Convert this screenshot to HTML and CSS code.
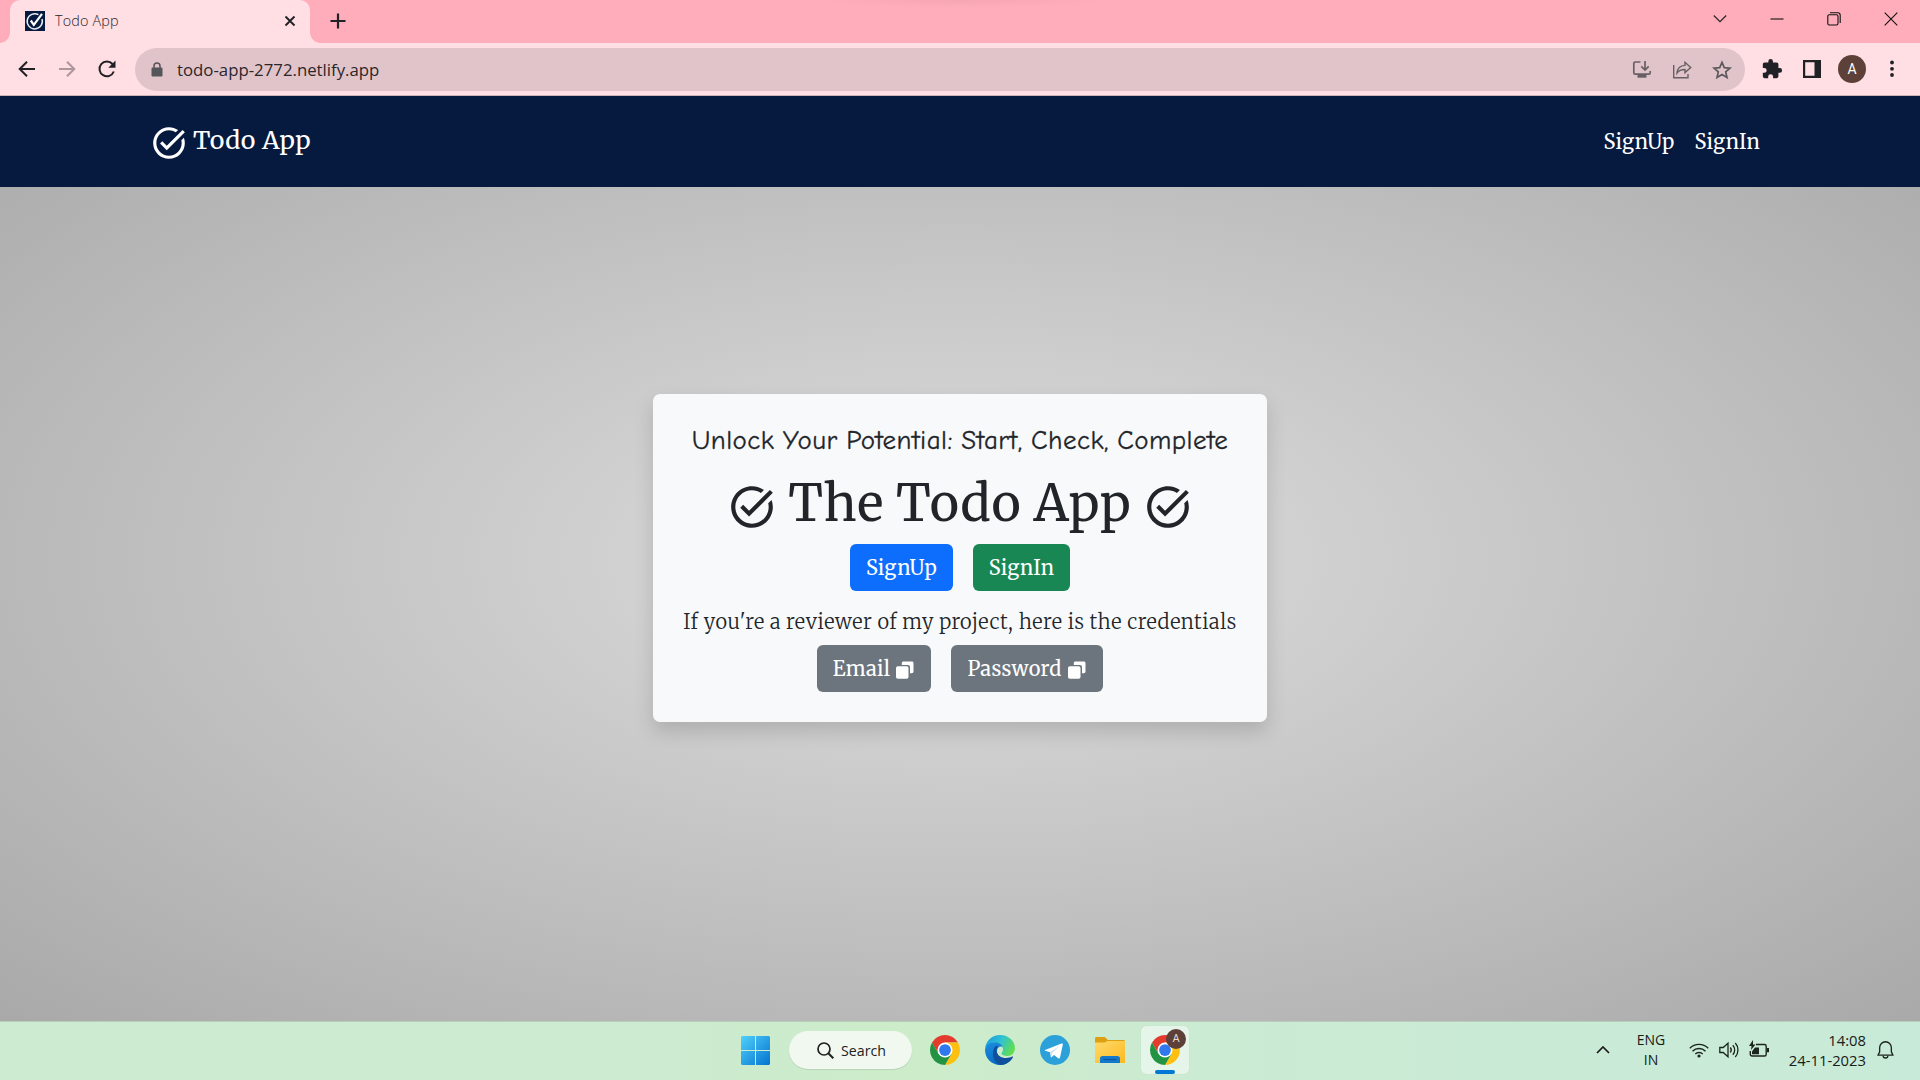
FILE: index.html
```html
<!DOCTYPE html>
<html lang="en">
<head>
<meta charset="utf-8">
<title>Todo App</title>
<link rel="stylesheet" href="styles.css">
</head>
<body>
<svg class="defs" width="0" height="0">
  <defs>
    <symbol id="task" viewBox="0 0 24 24">
      <path fill="currentColor" d="M22 5.18 10.59 16.6l-4.24-4.24 1.41-1.41 2.83 2.83 10-10L22 5.18zM19.79 10.22c.13.57.21 1.17.21 1.78 0 4.42-3.58 8-8 8s-8-3.58-8-8 3.58-8 8-8c1.58 0 3.04.46 4.28 1.25l1.44-1.44C16.1 2.67 14.13 2 12 2 6.48 2 2 6.48 2 12s4.48 10 10 10 10-4.48 10-10c0-1.19-.22-2.33-.6-3.39l-1.61 1.61z"/>
    </symbol>
    <symbol id="copy" viewBox="0 0 18 18">
      <path fill="#fff" d="M7.5.5h8.3c1 0 1.7.7 1.7 1.700v8.300c0 1-.7 1.700-1.700 1.700H14V6.200C14 4.900 13.100 4 11.800 4H5.800V2.200C5.800 1.200 6.500.5 7.500.5z"/>
      <rect fill="#fff" x="0" y="5.200" width="12.500" height="12.500" rx="1.800"/>
    </symbol>
    <symbol id="chrome" viewBox="0 0 48 48">
      <path fill="#e33b2e" d="M3.220 12A24 24 0 0 1 44.780 12L24 12L13.610 30z"/>
      <path fill="#fdc010" d="M44.780 12A24 24 0 0 1 24 48L34.390 30L24 12z"/>
      <path fill="#229342" d="M3.220 12A24 24 0 0 0 24 48L34.390 30L13.610 30z"/>
      <circle cx="24" cy="24" r="12" fill="#fff"/>
      <circle cx="24" cy="24" r="9.400" fill="#2f78ee"/>
    </symbol>
  </defs>
</svg>

<header class="tabstrip">
  <div class="tab">
    <svg class="favicon" viewBox="0 0 20 20"><rect width="20" height="20" fill="#061a40"/><path d="M13.500 3.700A7.600 7.600 0 1 0 17 8" fill="none" stroke="#e8ebf1" stroke-width="1.500"/><path d="M5.800 9.500l3 4.300L17 2.800" fill="none" stroke="#fff" stroke-width="2.200"/></svg>
    <span class="tab-title">Todo App</span>
    <svg class="tab-close" viewBox="0 0 12 12"><path d="M1.500 1.500l9 9M10.500 1.500l-9 9" stroke="#202124" stroke-width="1.900"/></svg>
  </div>
  <svg class="new-tab" viewBox="0 0 16 16"><path d="M8 .5v15M.5 8h15" stroke="#202124" stroke-width="2.200"/></svg>
  <div class="window-shade"></div>
  <div class="window-controls">
    <svg viewBox="0 0 14 14"><path d="M.8 3.500L7 9.700l6.200-6.200" fill="none" stroke="#222" stroke-width="1.100"/></svg>
    <svg viewBox="0 0 14 14"><path d="M.5 7h13" stroke="#111" stroke-width="1.100"/></svg>
    <svg viewBox="0 0 14 14"><g fill="none" stroke="#111" stroke-width="1.100"><rect x=".8" y="2.800" width="10.200" height="10.200" rx="1.500"/><path d="M3 .8h7.800c1.500 0 2.400 1 2.400 2.400V11"/></g></svg>
    <svg viewBox="0 0 14 14"><path d="M.7.7l12.600 12.600M13.300.7L.7 13.300" stroke="#111" stroke-width="1.100"/></svg>
  </div>
</header>

<div class="toolbar">
  <span class="cell"><svg width="20" height="20" viewBox="0 0 20 20"><path d="M18 10H3M10 2.700L2.700 10l7.300 7.300" fill="none" stroke="#202124" stroke-width="2"/></svg></span>
  <span class="cell"><svg width="20" height="20" viewBox="0 0 20 20"><path d="M2 10h15M10 2.700l7.300 7.300-7.300 7.300" fill="none" stroke="#ab979c" stroke-width="2"/></svg></span>
  <span class="cell"><svg width="20" height="20" viewBox="0 0 20 20"><path d="M16.800 12.500A7.400 7.400 0 1 1 15.500 5" fill="none" stroke="#202124" stroke-width="2"/><path d="M18.500 1.500v7.200h-7.200z" fill="#202124"/></svg></span>
  <div class="omnibox">
    <svg class="lock" viewBox="0 0 12 15"><path d="M3 6V4a3 3 0 0 1 6 0v2" fill="none" stroke="#5a5358" stroke-width="1.500"/><rect x=".5" y="5.500" width="11" height="9" rx="1.200" fill="#55565a"/></svg>
    <span class="url">todo-app-2772.netlify.app</span>
    <span class="cell"><svg width="20" height="20" viewBox="0 0 20 20"><g fill="none" stroke="#666064" stroke-width="1.700"><path d="M8.500 2H3.200C2.200 2 1.800 2.500 1.800 3.300v9.500c0 .9.500 1.400 1.400 1.400h13.600c.9 0 1.400-.5 1.400-1.400V11"/><path d="M13 1v8.500M9.300 6.300L13 10l3.700-3.700"/></g><path d="M5.500 15h9v2.700h-9z" fill="#666064"/></svg></span>
    <span class="cell"><svg width="20" height="20" viewBox="0 0 20 20"><g fill="none" stroke="#666064" stroke-width="1.400"><path d="M1.700 5v12.700H16V14"/><path d="M5 13c.5-5 3.500-7.300 8-7.600V2.300L18.700 7.500 13 12.600V9.500c-3.500 0-6 .8-8 3.500z"/></g></svg></span>
    <span class="cell"><svg width="20" height="20" viewBox="0 0 20 20"><path d="M10 2.300l2.300 5.300 5.700.5-4.300 3.800 1.300 5.600-5-3-5 3 1.300-5.600L2 8.100l5.700-.5z" fill="none" stroke="#5d595c" stroke-width="1.700"/></svg></span>
  </div>
  <span class="cell"><svg width="22" height="22" viewBox="0 0 24 24"><path fill="#202124" d="M20.500 11H19V7c0-1.100-.9-2-2-2h-4V3.500a2.500 2.500 0 0 0-5 0V5H4c-1.100 0-2 .9-2 2v3.800h1.500a2.700 2.700 0 0 1 0 5.400H2V20c0 1.100.9 2 2 2h3.800v-1.500a2.700 2.700 0 0 1 5.400 0V22H17c1.100 0 2-.9 2-2v-4h1.500a2.500 2.500 0 0 0 0-5z"/></svg></span>
  <span class="cell"><svg width="18" height="18" viewBox="0 0 18 18"><path fill="#202124" fill-rule="evenodd" d="M0 0h18v18H0zM2.200 2.200v13.600h9.300V2.200z"/></svg></span>
  <span class="cell"><span class="avatar">A</span></span>
  <span class="cell"><svg width="6" height="18" viewBox="0 0 6 18"><g fill="#202124"><circle cx="3" cy="2.500" r="1.900"/><circle cx="3" cy="8.800" r="1.900"/><circle cx="3" cy="15" r="1.900"/></g></svg></span>
</div>

<div class="page">
  <nav class="navbar">
    <div class="brand"><svg><use href="#task"/></svg><span>Todo App</span></div>
    <div class="nav-links"><span>SignUp</span><span>SignIn</span></div>
  </nav>
  <main class="stage">
    <section class="card">
      <p class="tagline">Unlock Your Potential: Start, Check, Complete</p>
      <h1 class="title"><svg><use href="#task"/></svg><span>The Todo App</span><svg><use href="#task"/></svg></h1>
      <div class="actions"><span class="btn primary">SignUp</span><span class="btn success">SignIn</span></div>
      <p class="note">If you're a reviewer of my project, here is the credentials</p>
      <div class="actions"><span class="btn secondary email">Email<svg><use href="#copy"/></svg></span><span class="btn secondary password">Password<svg><use href="#copy"/></svg></span></div>
    </section>
  </main>
</div>

<footer class="taskbar">
  <div class="apps">
    <svg class="start" viewBox="0 0 29 29"><defs><linearGradient id="win" gradientUnits="userSpaceOnUse" x1="0" y1="0" x2="29" y2="29"><stop offset="0" stop-color="#50d0fa"/><stop offset="1" stop-color="#0573d0"/></linearGradient></defs><path fill="url(#win)" d="M1 0h13v14H0V1zM15 0h13l1 1v13H15zM0 15h14v14H1l-1-1zM15 15h14v13l-1 1H15z"/></svg>
    <div class="search"><svg width="17" height="17" viewBox="0 0 17 17"><circle cx="7" cy="7" r="6" fill="none" stroke="#202020" stroke-width="1.700"/><path d="M11.300 11.300l5 5" stroke="#202020" stroke-width="2"/></svg><span>Search</span></div>
    <span class="app"><svg><use href="#chrome"/></svg></span>
    <span class="app"><svg viewBox="0 0 30 30"><defs><linearGradient id="eg" x1="0" y1=".2" x2="1" y2=".6"><stop offset="0" stop-color="#189be0"/><stop offset=".5" stop-color="#31c4cf"/><stop offset="1" stop-color="#62df48"/></linearGradient><linearGradient id="eb" x1="0" y1="0" x2=".5" y2="1"><stop offset="0" stop-color="#1b8fe0"/><stop offset="1" stop-color="#0668c0"/></linearGradient></defs>
      <path fill="url(#eg)" d="M0 14C.6 6 7 0 15 0c9 0 15 6.500 15 13 0 5-3.500 8-7.500 8-3.500 0-6-1.300-6-2.500 0-.8 1.500-1.600 1.500-4C18 10 14 7.500 10 7.500 4.500 7.500 1 11 0 14z"/>
      <path fill="url(#eb)" d="M0 15C.5 10 5 7.300 9.800 7.300c3.800 0 7 1.700 7.800 4.700-1.500-1.300-5.600-.5-5.600 4.500 0 6 6 9.500 15 6.500C24.500 27.500 20 30 15 30 7 30 0 23.500 0 15z"/>
      <path fill="#104f9b" d="M11 10.800c-5 4.700-4 15.700 4 19.100 5.500.2 10.200-2.900 13-7.700.2-.6-.3-.9-.8-.6-7.200 3.700-16-.1-15.600-6.600.1-1.500.7-2.800 1.500-3.600z"/></svg></span>
    <span class="app"><svg viewBox="0 0 30 30"><circle cx="15" cy="15" r="15" fill="#2ca0d9"/><path fill="#fff" d="M5 15L21.500 8.500c.8-.3 1.500.2 1.300 1.200L20 22.500c-.2 1-.9 1.200-1.700.7l-4.300-3.200-2.200 2.100c-.5.4-.9.300-1-.3l-.8-4.600-4.800-1.500c-.7-.3-.7-.5-.2-.7z"/><path fill="#c5deed" d="M10.300 17l8.900-5.800L12 18.100l-.6 3.700z"/></svg></span>
    <span class="app"><svg viewBox="0 0 30 30"><defs><linearGradient id="fold" x1="0" y1="0" x2="1" y2="1"><stop offset="0" stop-color="#ffda6b"/><stop offset="1" stop-color="#fcb91f"/></linearGradient></defs><path fill="#dda011" d="M0 3.500C0 2.600.6 2 1.500 2h8.300L13 5h15.500c.9 0 1.500.6 1.500 1.500V12H0z"/><path fill="url(#fold)" d="M0 7.500h9.500L12.500 6H30v22H0z"/><path fill="#1478cb" d="M5 28v-4.500C5 22 6 21 7.500 21h15c1.500 0 2.500 1 2.500 2.500V28z"/><path d="M8.500 24.500h13" stroke="#0b569c" stroke-width="1.200"/></svg></span>
    <span class="app active"><svg><use href="#chrome"/></svg><span class="badge">A</span></span>
  </div>
  <div class="tray">
    <svg class="chevron" viewBox="0 0 14 8"><path d="M1 7l6-6 6 6" fill="none" stroke="#1a1a1a" stroke-width="1.700"/></svg>
    <div class="lang"><span>ENG</span><span>IN</span></div>
    <svg class="status" viewBox="0 0 20 20"><g fill="none" stroke="#1c241e" stroke-width="1.400"><path d="M.8 8.200a13 13 0 0 1 18.400 0M3.500 11.200a9.200 9.200 0 0 1 13 0M6.300 14a5.300 5.300 0 0 1 7.400 0"/></g><circle cx="10" cy="16" r="1.600" fill="#1c241e"/></svg>
    <svg class="status" viewBox="0 0 20 20"><g fill="none" stroke="#1c241e" stroke-width="1.300"><path d="M.8 7.500h3.400L9 3.200v13.600l-4.800-4.300H.8z"/><path d="M11.300 7.500a4 4 0 0 1 0 5M13.800 5.200a7 7 0 0 1 0 9.600M16.300 3a10.500 10.500 0 0 1 0 14"/></g></svg>
    <svg class="status" viewBox="0 0 20 20"><path d="M7 4.500h8.500c1 0 1.700.7 1.700 1.700v8c0 1-.7 1.800-1.700 1.800H3c-1 0-1.700-.8-1.700-1.800V11" fill="none" stroke="#1c241e" stroke-width="1.400"/><path d="M18 8h2v4.300h-2zM3 14.300V11.500l3-4h4v6.800zM4 0L0 6h2.500L2 10l4.500-5.500H4z" fill="#1c241e"/></svg>
    <div class="clock"><span>14:08</span><span>24-11-2023</span></div>
    <svg class="bell" viewBox="0 0 18 20"><path d="M1 15.500L2.800 12V7.500a6.200 6.200 0 0 1 12.400 0V12L17 15.500z" fill="none" stroke="#1c241e" stroke-width="1.400" stroke-linejoin="round"/><path d="M6.500 16a2.500 2.500 0 0 0 5 0" fill="none" stroke="#1c241e" stroke-width="1.400"/></svg>
  </div>
</footer>
</body>
</html>
```
FILE: styles.css
```css
* { box-sizing: border-box; }
html, body { margin: 0; height: 1080px; overflow: hidden; }
body {
  display: flex;
  flex-direction: column;
  width: 1920px;
  font-family: "Open Sans", "Noto Sans", sans-serif;
  color: #202124;
}
p, h1 { margin: 0; font-weight: 400; }
svg { display: block; flex: none; }
.defs { position: absolute; }

/* Browser tab strip */
.tabstrip {
  display: flex;
  height: 43px;
  padding-left: 10px;
  background: #ffadbb;
}
.tab {
  position: relative;
  display: flex;
  align-items: center;
  width: 300px;
  height: 43px;
  padding: 0 14px 1px 15px;
  border-radius: 10px 10px 0 0;
  background: #ffdee4;
}
.tab::before, .tab::after {
  content: "";
  position: absolute;
  bottom: 0;
  width: 10px;
  height: 10px;
}
.tab::before { left: -10px; background: radial-gradient(circle at 0 0, #ffadbb 9.5px, #ffdee4 10px); }
.tab::after { right: -10px; background: radial-gradient(circle at 100% 0, #ffadbb 9.5px, #ffdee4 10px); }
.favicon { width: 20px; height: 20px; }
.tab-title { flex: 1; margin: -1px 0 0 10px; font-size: 14.4px; font-weight: 300; color: #2b2629; letter-spacing: .15px; }
.tab-close { width: 12px; height: 12px; }
.new-tab { width: 16px; height: 16px; margin: 13px 0 0 19.5px; }
.window-shade {
  width: 290px;
  height: 8px;
  margin-left: 470px;
  background: radial-gradient(ellipse 50% 100% at 50% 0, rgba(120, 60, 80, .07), transparent);
}
.window-controls { display: flex; margin-left: auto; padding-right: 1px; }
.window-controls svg { width: 14px; height: 14px; margin: 12px 21.5px 0; }

/* Address bar row */
.toolbar {
  display: flex;
  height: 53px;
  padding: 5px 8px 4px 7px;
  background: #ffdee4;
  border-bottom: 1px solid #cbb3ba;
}
.cell {
  display: flex;
  flex: none;
  align-items: center;
  justify-content: center;
  width: 40px;
  height: 42px;
}
.omnibox {
  display: flex;
  flex: 1;
  align-items: center;
  height: 43px;
  margin: 0 7px 0 8px;
  padding: 0 3px 0 16px;
  border-radius: 22px;
  background: #e1c4ca;
}
.lock { width: 12px; height: 15px; }
.url { flex: 1; margin-left: 14px; font-size: 16.8px; color: #2b2629; }
.avatar {
  width: 28px;
  height: 28px;
  border-radius: 50%;
  background: #5d4037;
  color: #fff;
  font: 14px/28px Roboto, sans-serif;
  text-align: center;
}

/* Web page */
.page {
  display: flex;
  flex-direction: column;
  height: 925px;
  background: radial-gradient(#dedede, darkgray);
  font-family: Merriweather, "DejaVu Serif Condensed", serif;
}
.navbar {
  display: flex;
  align-items: center;
  justify-content: space-between;
  height: 91px;
  padding: 0 160px 0 150px;
  background: #061a40;
  color: #fff;
}
.brand { display: flex; align-items: center; font-size: 25px; letter-spacing: .3px; }
.brand svg { width: 38px; height: 38px; margin-top: 3px; }
.brand span { margin: -4px 0 0 5px; line-height: 36px; }
.nav-links { display: flex; gap: 20px; font-size: 20px; letter-spacing: .3px; }
.stage {
  display: flex;
  justify-content: center;
  padding-top: 207px;
}
.card {
  display: flex;
  flex-direction: column;
  align-items: center;
  width: 614px;
  height: 328px;
  padding-top: 30px;
  border-radius: 7px;
  background: #f8f9fa;
  box-shadow: 0 10px 20px rgba(0, 0, 0, .15);
  color: #212529;
}
.tagline {
  height: 30px;
  font: 27px/34px "Comic Neue", "Open Sans", cursive;
  letter-spacing: .45px;
  word-spacing: -1px;
  white-space: nowrap;
  -webkit-text-stroke: .3px #212529;
}
.title {
  display: flex;
  align-items: center;
  height: 60px;
  margin: 20px 0 10px;
  font-size: 50px;
  letter-spacing: .5px;
  line-height: 60px;
  white-space: nowrap;
}
.title svg { width: 50px; height: 50px; margin-top: 6px; }
.title span { margin: 0 12px 0 11.5px; }
.actions { display: flex; gap: 20px; }
.btn {
  display: flex;
  align-items: center;
  justify-content: center;
  width: 103px;
  height: 47px;
  border-radius: 6px;
  color: #fff;
  font-size: 20px;
  letter-spacing: .3px;
}
.primary { background: #0d6efd; }
.success { width: 97px; background: #198754; }
.secondary { background: #6c757d; }
.email { width: 114px; }
.password { width: 152px; }
.btn svg { width: 18px; height: 18px; margin: 3px 1px 0 6px; }
.note { margin: 16px 0 8px; font-size: 20px; line-height: 30px; letter-spacing: .5px; white-space: nowrap; font-weight: 300; }

/* Desktop taskbar */
.taskbar {
  display: flex;
  justify-content: space-between;
  height: 59px;
  padding: 0 26px 2px 741px;
  border-top: 1px solid #b9cdbb;
  background: linear-gradient(90deg, #cdebd1, #ccebd0 35%, #cdecc9 47%, #cbebd3 62%, #c8ead8);
}
.apps { display: flex; align-items: center; }
.start { width: 29px; height: 29px; }
.search {
  display: flex;
  align-items: center;
  width: 123px;
  height: 38px;
  margin: 0 9px 0 19px;
  padding-left: 28px;
  border-radius: 19px;
  background: #f0f8f0;
  box-shadow: 0 1px 1px rgba(0, 0, 0, .1);
  font-size: 14.2px;
}
.search span { margin-left: 7px; }
.app {
  position: relative;
  display: flex;
  align-items: center;
  justify-content: center;
  width: 48px;
  height: 48px;
  margin-right: 7px;
}
.app svg { width: 30px; height: 30px; }
.active { border-radius: 5px; background: #e6f5ea; box-shadow: 0 0 1px rgba(0, 0, 0, .15); }
.active::after {
  content: "";
  position: absolute;
  bottom: 0;
  left: 14px;
  width: 20px;
  height: 4px;
  border-radius: 2px;
  background: #0078d4;
}
.badge {
  position: absolute;
  top: 3px;
  right: 3px;
  width: 20px;
  height: 20px;
  border-radius: 50%;
  background: #5d4037;
  color: #e8dcd8;
  font: 11px/20px Roboto, sans-serif;
  text-align: center;
}
.tray { display: flex; align-items: center; color: #17201a; }
.chevron { width: 14px; height: 8px; }
.lang {
  display: flex;
  flex-direction: column;
  align-items: center;
  width: 32px;
  margin: 0 22px 0 25px;
  font-size: 14px;
  line-height: 20px;
}
.status { width: 20px; height: 20px; margin-right: 10px; }
.clock {
  display: flex;
  flex-direction: column;
  align-items: flex-end;
  width: 87px;
  font-size: 14.800px;
  line-height: 20px;
}
.bell { width: 17px; height: 20px; margin-left: 11px; }
```
